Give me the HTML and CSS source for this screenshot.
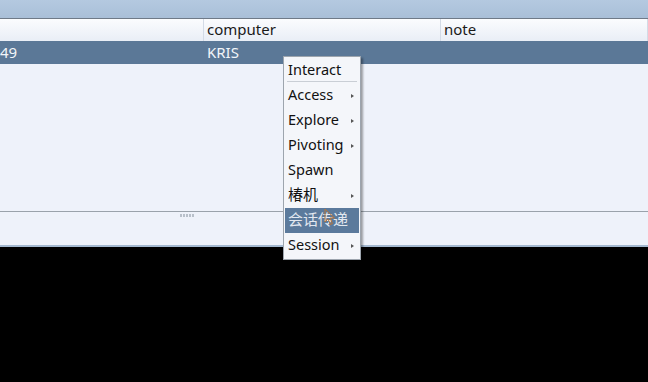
FILE: index.html
```html
<!DOCTYPE html>
<html>
<head>
    <meta charset="UTF-8">
    <title>Sessions</title>
    <link rel="stylesheet" href="styles.css">
</head>
<body>
    <div class="app">
        <div class="topbar"></div>

        <div class="table">
            <div class="row head">
                <div class="cell"></div>
                <div class="cell">computer</div>
                <div class="cell">note</div>
            </div>
            <div class="row selected">
                <div class="cell">49</div>
                <div class="cell">KRIS</div>
                <div class="cell"></div>
            </div>
        </div>

        <div class="panel">
            <div class="grip"></div>
        </div>
    </div>

    <ul class="menu">
        <li class="item">Interact</li>
        <li class="sep"></li>
        <li class="item sub">Access</li>
        <li class="item sub">Explore</li>
        <li class="item sub">Pivoting</li>
        <li class="item">Spawn</li>
        <li class="item sub cjk">椿机</li>
        <li class="item cjk active">会话传递</li>
        <li class="item sub">Session</li>
    </ul>

    <svg class="cursor" width="12" height="18" viewBox="0 0 12 18">
        <path d="M1 1 L1 14 L4 11 L6.5 16.5 L8.5 15.5 L6 10 L10.5 10 Z" fill="none" stroke="#b8763a" stroke-width="1"/>
    </svg>
</body>
</html>
```

FILE: styles.css
```css
body { margin: 0; background: #000; width: 648px; height: 382px; overflow: hidden; position: relative; font-family: "Noto Sans", "Noto Sans CJK SC", sans-serif; }
.app { background: #eef2fa; }
.topbar { height: 18px; background: linear-gradient(#b4c9e0, #a9bfd8); border-bottom: 1px solid #6f7a88; }
.table { height: 192px; }
.row { display: grid; grid-template-columns: 204px 237px 1fr; font-size: 15px; }
.head { height: 22px; line-height: 21px; background: linear-gradient(#fbfcfe, #e9eef6); color: #1a1a1a; }
.head .cell { border-right: 1px solid #d3dbe6; }
.cell { padding-left: 3px; white-space: nowrap; overflow: hidden; }
.row .cell:first-child { padding-left: 0; }
.selected { height: 23px; line-height: 22px; background: #5b7897; color: #f2f5f9; }
.panel { height: 33px; border-top: 1px solid #9aa2ab; border-bottom: 2px solid #a3b8cf; position: relative; }
.grip { width: 15px; height: 3px; margin: 2px 0 0 180px; background: repeating-linear-gradient(90deg, #b8c0ca 0 2px, transparent 2px 3px); }

.menu { position: absolute; left: 283px; top: 56px; width: 76px; margin: 0; padding: 1px 0; list-style: none; background: #f4f6fa; border: 1px solid #9da5ae; box-shadow: 2px 2px 2px rgba(0,0,0,0.35); font-size: 14.5px; }
.item { height: 25px; line-height: 23px; padding-left: 3px; margin: 0 1px; color: #111; position: relative; }
.item:first-child { height: 23px; line-height: 22px; }
.sep { height: 1px; margin: 0 3px 1px; background: #c9ced5; }
.sub::after { content: ""; position: absolute; right: 5px; top: 11px; border-left: 3px solid #555; border-top: 2px solid transparent; border-bottom: 2px solid transparent; }
.cjk { font-size: 15px; }
.active { background: #5b7a9c; color: #e2e8f0; }
.cursor { position: absolute; left: 324px; top: 208px; }
```
